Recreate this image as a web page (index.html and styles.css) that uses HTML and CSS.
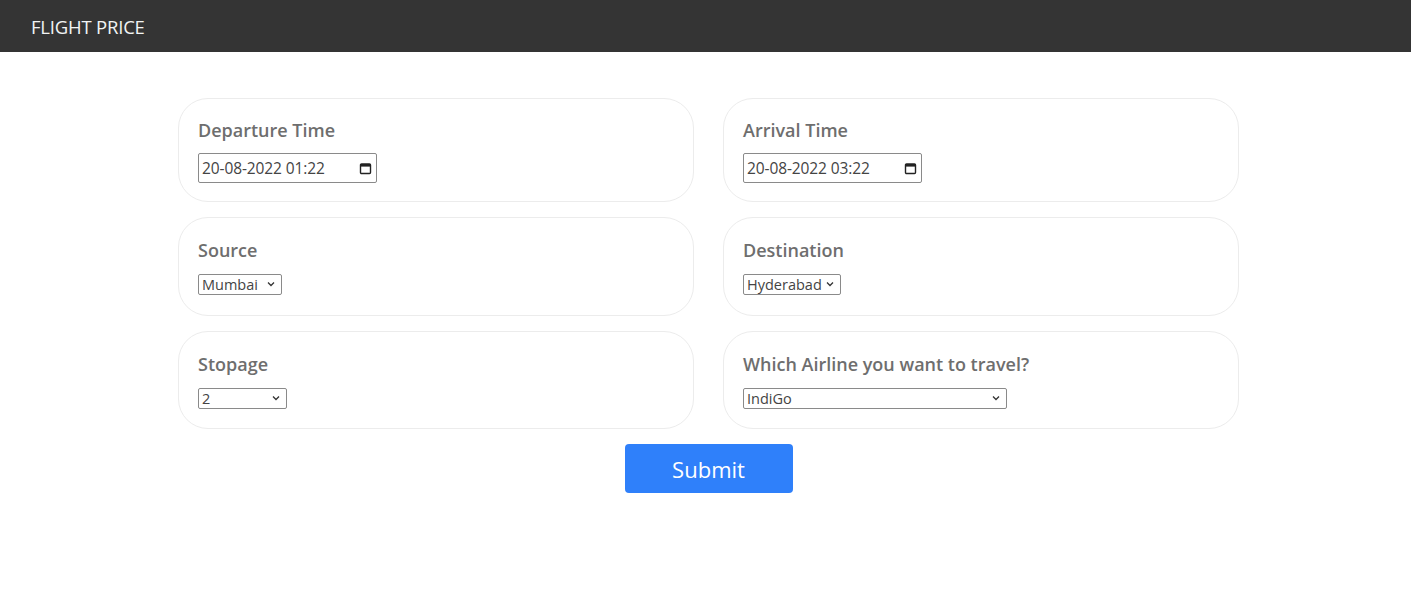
FILE: index.html
```html
<!DOCTYPE html>
<html lang="en">
<head>
<meta charset="utf-8">
<title>Flight Price</title>
<link rel="stylesheet" href="styles.css">
</head>
<body>
<header class="topbar">
  <span class="brand">FLIGHT PRICE</span>
</header>
<main class="content">
  <form class="form">
    <div class="grid">
      <div class="card card-tall">
        <label class="label">Departure Time</label>
        <div class="dt-input">
          <span class="dt-text">20-08-2022 01:22</span>
          <svg class="cal" width="13" height="13" viewBox="0 0 13 13"><rect x="1.5" y="2" width="10" height="9.5" rx="1" fill="none" stroke="#222" stroke-width="1.4"/><rect x="1.5" y="2" width="10" height="2.6" fill="#222"/></svg>
        </div>
      </div>
      <div class="card card-tall">
        <label class="label">Arrival Time</label>
        <div class="dt-input">
          <span class="dt-text">20-08-2022 03:22</span>
          <svg class="cal" width="13" height="13" viewBox="0 0 13 13"><rect x="1.5" y="2" width="10" height="9.5" rx="1" fill="none" stroke="#222" stroke-width="1.4"/><rect x="1.5" y="2" width="10" height="2.6" fill="#222"/></svg>
        </div>
      </div>
      <div class="card">
        <label class="label">Source</label>
        <div class="sel sel-source">
          <select><option>Mumbai</option><option>Delhi</option><option>Kolkata</option><option>Chennai</option><option>Banglore</option></select>
          <svg class="chev" width="8" height="6" viewBox="0 0 8 6"><path d="M1 1.5 L4 4.5 L7 1.5" fill="none" stroke="#333" stroke-width="1.3"/></svg>
        </div>
      </div>
      <div class="card">
        <label class="label">Destination</label>
        <div class="sel sel-dest">
          <select><option>Hyderabad</option><option>Cochin</option><option>Delhi</option><option>Kolkata</option></select>
          <svg class="chev" width="8" height="6" viewBox="0 0 8 6"><path d="M1 1.5 L4 4.5 L7 1.5" fill="none" stroke="#333" stroke-width="1.3"/></svg>
        </div>
      </div>
      <div class="card">
        <label class="label">Stopage</label>
        <div class="sel sel-stop">
          <select><option>2</option><option>0</option><option>1</option><option>3</option><option>4</option></select>
          <svg class="chev" width="8" height="6" viewBox="0 0 8 6"><path d="M1 1.5 L4 4.5 L7 1.5" fill="none" stroke="#333" stroke-width="1.3"/></svg>
        </div>
      </div>
      <div class="card">
        <label class="label">Which Airline you want to travel?</label>
        <div class="sel sel-air">
          <select><option>IndiGo</option><option>Air India</option><option>Jet Airways</option><option>SpiceJet</option></select>
          <svg class="chev" width="8" height="6" viewBox="0 0 8 6"><path d="M1 1.5 L4 4.5 L7 1.5" fill="none" stroke="#333" stroke-width="1.3"/></svg>
        </div>
      </div>
    </div>
    <div class="actions">
      <button type="button" class="submit">Submit</button>
    </div>
  </form>
</main>
</body>
</html>
```
FILE: styles.css
```css
* { box-sizing: border-box; }
html, body { margin: 0; padding: 0; background: #fff; }
body { font-family: "Open Sans", "Noto Sans", sans-serif; color: #666; }

.topbar {
  height: 52px;
  background: #343434;
  display: flex;
  align-items: center;
  padding-left: 31px;
}
.brand {
  color: #f2f4f4;
  font-size: 18.5px;
  letter-spacing: -0.2px;
}

.content {
  padding: 46px 0 0 178px;
}
.form { width: 1061px; }
.grid {
  display: grid;
  grid-template-columns: 516px 516px;
  grid-template-rows: 104px 99px 98px;
  column-gap: 29px;
  row-gap: 15px;
}
.card {
  border: 1px solid #ececec;
  border-radius: 30px;
  padding: 19px 19px 18px;
  display: flex;
  flex-direction: column;
}
.card-tall { padding-top: 18px; }
.label {
  font-size: 18px;
  font-weight: 600;
  line-height: 26px;
  color: #6e6e6e;
  letter-spacing: 0;
  margin-bottom: 10px;
}

.dt-input {
  width: 179px;
  height: 30px;
  border: 1px solid #8a8a8a;
  border-radius: 2px;
  display: flex;
  align-items: center;
  justify-content: space-between;
  padding: 0 4px 0 3px;
}
.dt-text {
  font-size: 15.5px;
  color: #444;
  letter-spacing: -0.1px;
}
.cal { display: block; }

.sel { position: relative; height: 21px; }
.sel select {
  -webkit-appearance: none;
  appearance: none;
  width: 100%;
  height: 21px;
  border: 1px solid #8a8a8a;
  border-radius: 2px;
  background: #fff;
  font-family: "Open Sans", "Noto Sans", sans-serif;
  font-size: 14.5px;
  color: #444;
  padding: 0 0 0 3px;
  margin: 0;
  line-height: 19px;
}
.chev { position: absolute; right: 7px; top: 8px; pointer-events: none; }
.sel-source { width: 84px; }
.sel-dest { width: 98px; }
.sel-stop { width: 89px; }
.sel-air { width: 264px; }

.actions {
  display: flex;
  justify-content: center;
  padding-top: 15px;
}
.submit {
  width: 168px;
  height: 49px;
  background: #2f80fa;
  border: 0;
  border-radius: 4px;
  color: #fff;
  font-family: "Open Sans", "Noto Sans", sans-serif;
  font-size: 22px;
  padding: 0;
}
```
